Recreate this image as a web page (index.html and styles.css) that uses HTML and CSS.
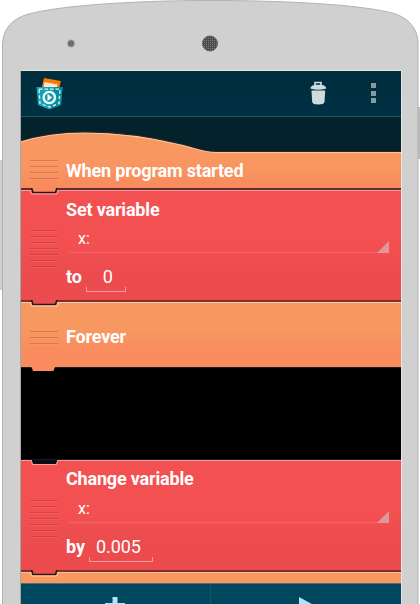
FILE: index.html
```html
<!DOCTYPE html>
<html lang="en">
<head>
<meta charset="utf-8">
<title>Pocket Code</title>
<link rel="stylesheet" href="styles.css">
</head>
<body>
<div class="phone">
  <svg class="shell" width="420" height="604" viewBox="0 0 420 604">
    <defs>
      <pattern id="mesh" width="2" height="2" patternUnits="userSpaceOnUse"><rect width="2" height="2" fill="#4b4b4b"/><rect width="1" height="1" fill="#7c7c7c"/></pattern>
    </defs>
    <path d="M0 160H3V290H0Z" fill="#cfcfcf"/><path d="M2.5 160V290" stroke="#b3b3b3"/>
    <path d="M417 107H420V159H417Z" fill="#bcbcbc"/>
    <path d="M2.5 610V44C3 29 12 19 27 14.500C60 5 140 .5 210 .5S360 4 394 13.500C408 18 418 28 418 44V610Z" fill="#d0d0d0" stroke="#b2b2b2"/>
    <circle cx="71" cy="43.500" r="4.500" fill="#bdbdbd"/><circle cx="71" cy="43.500" r="3.200" fill="#6e6e6e"/>
    <circle cx="210" cy="43.500" r="7.600" fill="url(#mesh)" stroke="#555" stroke-width=".7"/>
  </svg>
  <main class="screen">
    <header class="appbar">
      <svg class="logo" width="27" height="33" viewBox="0 0 27 33">
        <path d="M8 0 24.800 3 22.500 14 5.500 11Z" fill="#ff7900"/>
        <path d="M8.500 4 21.500 6.500 20 14H7Z" fill="#fbe5c8"/>
        <path d="M.5 9H26.500L25 27 13.500 31.500 2 27Z" fill="#15a1b3"/>
        <path d="M19 9H26.500L25 27 13.500 31.500Z" fill="#078a99"/>
        <path d="M3 11.200H24L23 25.500 13.500 29.200 4 25.500Z" fill="none" stroke="#d9f5f6" stroke-width="1.300" stroke-dasharray="3.500 2"/>
        <circle cx="13.300" cy="19.500" r="7.500" fill="#15a1b3"/>
        <circle cx="13.300" cy="19.500" r="5.700" fill="#15a1b3" stroke="#fff" stroke-width="2.300"/>
        <path d="M11.500 16 16 19.500 11.500 23Z" fill="#fff"/>
      </svg>
      <svg class="trash" width="17" height="24" viewBox="0 0 17 24">
        <path d="M5 4V1.500H11V4" fill="none" stroke="#cfdadd" stroke-width="1.700"/>
        <path d="M.3 7.500C1 4 5 3.800 8.300 3.800S15.700 4 16.300 7.500Q12 8.700 8.300 8.700T.3 7.500Z" fill="#cfdadd"/>
        <path d="M1.500 9.500H15.200L14.500 21Q14 23.500 8.300 23.500T2.200 21Z" fill="#cfdadd"/>
      </svg>
      <div class="more"><i></i><i></i><i></i></div>
    </header>

    <section class="brick hat">
      <svg class="hat-shape" width="380" height="71" viewBox="0 0 380 71">
        <defs><linearGradient id="orange" x1="0" y1="0" x2="0" y2="1"><stop offset=".3" stop-color="#f89861"/><stop offset=".65" stop-color="#f99460"/><stop offset="1" stop-color="#f98a5d"/></linearGradient></defs>
        <path d="M0 25C20 18.500 42 16 64 16C105 16 135 22 160 28C175 31.500 182 35.500 195 35.500H380V71H0Z" fill="url(#orange)"/>
        <path d="M0 24C20 17.500 42 15 64 15C105 15 135 21 160 27C175 30.500 182 34.500 195 34.500H380" fill="none" stroke="#35251f"/>
        <path d="M0 25C20 18.500 42 16 64 16C105 16 135 22 160 28C175 31.500 182 35.500 195 35.500H380" fill="none" stroke="#ffc59d" stroke-width="1.200"/>
      </svg>
      <div class="grip four"></div>
      <h2>When program started</h2>
      <svg class="tab" width="30" height="7" viewBox="0 0 30 7"><path d="M2 0 3.500 4H25.500L27 0Z" fill="#f98a5d"/><path d="M1.500 0 3 4.500H25.500L27 0" fill="none" stroke="#24191a" stroke-width="1.700"/><path d="M0 2 1.500 6H27L28.500 2" fill="none" stroke="#ffa2a0"/></svg>
    </section>

    <section class="brick red">
      <div class="grip seven"></div>
      <h2>Set variable</h2>
      <div class="spinner">x:</div>
      <div class="formula"><b>to</b><span class="field zero">0</span></div>
      <svg class="tab" width="30" height="7" viewBox="0 0 30 7"><path d="M2 0 3.500 4H25.500L27 0Z" fill="#ec4c4e"/><path d="M1.500 0 3 4.500H25.500L27 0" fill="none" stroke="#24191a" stroke-width="1.700"/><path d="M0 2 1.500 6H27L28.500 2" fill="none" stroke="#ffc99f"/></svg>
    </section>

    <section class="brick forever">
      <div class="grip three"></div>
      <h2>Forever</h2>
      <svg class="tab" width="30" height="7" viewBox="0 0 30 7"><path d="M1.500 0 3 4H23.500L25 0Z" fill="#fa8b5f"/></svg>
    </section>

    <div class="gap"></div>

    <section class="brick red change">
      <svg class="slot" width="30" height="7" viewBox="0 0 30 7"><path d="M1.500 0 3 4H26L27.500 0Z" fill="#090d12"/><path d="M1 0 2.500 4.500H26.500L28 0" fill="none" stroke="#ff9c9b"/></svg>
      <div class="grip seven"></div>
      <h2>Change variable</h2>
      <div class="spinner">x:</div>
      <div class="formula"><b>by</b><span class="field value">0.005</span></div>
      <svg class="tab" width="30" height="7" viewBox="0 0 30 7"><path d="M2 0 3.500 4H25.500L27 0Z" fill="#ec4c4e"/><path d="M1.500 0 3 4.500H25.500L27 0" fill="none" stroke="#24191a" stroke-width="1.700"/><path d="M0 2 1.500 6H27L28.500 2" fill="none" stroke="#ffc99f"/></svg>
    </section>
    <div class="next"></div>

    <footer class="toolbar">
      <div class="tool add"><svg width="20" height="20" viewBox="0 0 20 20"><path d="M7.500 0H12.500V6H20V12H12.500V20H7.500V12H0V6H7.500Z" fill="#afe3f8"/></svg></div>
      <div class="tool play"><svg width="22" height="24" viewBox="0 0 22 24"><path d="M0 0 22 12 0 24Z" fill="#afe3f8"/></svg></div>
    </footer>
  </main>
</div>
</body>
</html>
```
FILE: styles.css
```css
* { box-sizing: border-box; }
body { margin: 0; background: #fff; font-family: Roboto, "Liberation Sans", sans-serif; color: #fff; overflow: hidden; }
svg { display: block; }
.phone { position: relative; width: 420px; height: 604px; padding: 71px 19px 0 21px; overflow: hidden; }
.shell { position: absolute; left: 0; top: 0; }
.screen { position: relative; width: 380px; height: 533px; background: #03222b; box-shadow: 0 -1px #e3e9e4, 1px 0 #e3e6e6, -1px 0 #a0a8a8; }
.appbar { display: flex; height: 46px; padding: 7px 25px 0 15px; background: linear-gradient(#002c3c, #003143); border-bottom: 1px solid #285060; }
.trash { margin: 3px 0 0 247px; }
.more { display: flex; flex-direction: column; gap: 2.500px; margin: 5px 0 0 auto; }
.more i { width: 5px; height: 5px; background: #8599a1; }

.brick { position: relative; padding-left: 45px; }
.brick h2 { position: relative; margin: 0; font-size: 18px; line-height: 22px; font-weight: 700; letter-spacing: -.18px; white-space: nowrap; }
.hat { height: 73px; padding-top: 43px; border-bottom: 2px solid #5c3030; }
.hat-shape { position: absolute; left: 0; top: 0; }
.tab { position: absolute; left: 9px; bottom: -7px; z-index: 2; }
.slot { position: absolute; left: 9px; top: -1px; }
.grip { position: absolute; left: 9px; width: 28px; background: repeating-linear-gradient(rgba(90, 20, 10, .2) 0 1px, rgba(255, 200, 150, .10) 1px 2px, transparent 2px 6px); }
.four { top: 43px; height: 20px; }
.three { top: 28px; height: 14px; }
.seven { top: 39px; height: 38px; }

.red { height: 112px; padding-top: 8px; background: linear-gradient(#f35052 0 45%, #ec4c4e 75%, #eb4b4d); border-top: 1px solid #ff9998; border-bottom: 2px solid #7d302d; }
.spinner { position: relative; width: 320px; height: 25px; margin: 7px 0 0 3px; padding: 1px 0 0 9px; border-bottom: 1px solid rgba(255, 255, 255, .13); font-size: 16px; line-height: 20px; }
.change { padding-top: 7px; }
.change .spinner { margin-top: 8px; }
.spinner::after { content: ""; position: absolute; right: 0; bottom: -1px; width: 12px; height: 12px; background: #df9798; clip-path: polygon(100% 0, 100% 100%, 0 100%); }
.formula { display: flex; margin-top: 12px; font-size: 18px; line-height: 24px; letter-spacing: -.1px; }
.field { position: relative; height: 27px; margin-left: 4px; text-align: center; font-weight: 400; }
.field::after { content: ""; position: absolute; inset: auto 0 0; height: 4px; border: 1px solid rgba(255, 255, 255, .45); border-top: 0; }
.zero { width: 40px; padding-left: 4px; }
.value { width: 64px; padding-right: 5px; }
.forever { height: 66px; padding-top: 23px; background: linear-gradient(#f89861 0 40%, #f98d5e 70%, #fa8b5f); border-top: 1px solid #ffc99f; border-bottom: 1px solid #17252b; }
.gap { height: 92px; background: #000; border-bottom: 1px solid #0a202b; }
.next { height: 11px; background: #f99861; border-top: 1px solid #ffc28f; }
.toolbar { display: grid; grid-template-columns: 1fr 1fr; height: 21px; overflow: hidden; background: #00485f; border-top: 1px solid #527078; }
.tool { padding: 13px 0 0 84px; }
.add { border-right: 1px solid #1c5364; }
.play { padding-left: 88px; }
```
